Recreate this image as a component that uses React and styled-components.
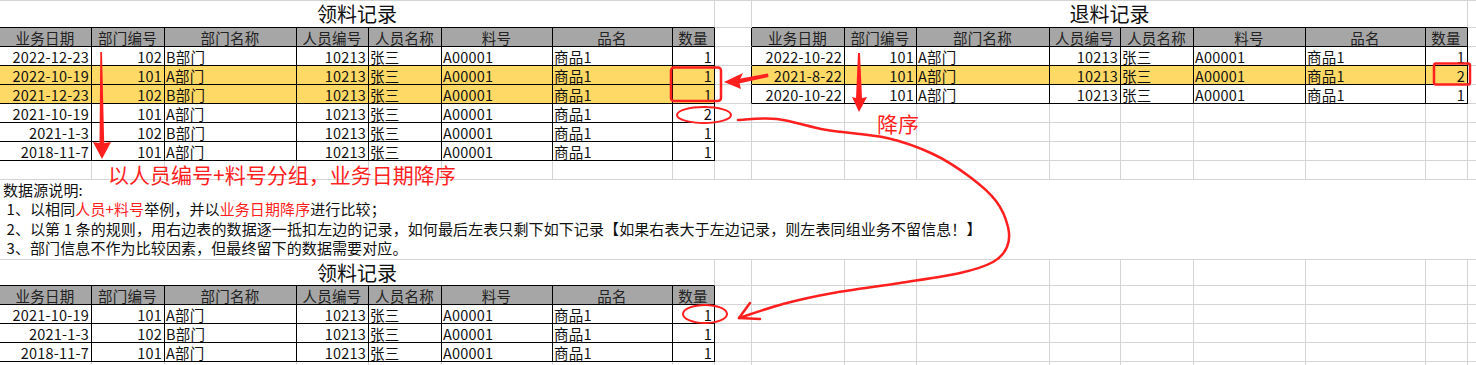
import React from 'react';
import styled, { createGlobalStyle } from 'styled-components';

const GRID = '#d4d4d4';
const LINE = '#000';
const RED = '#ff1f1f';

const COLS = [92, 73, 132, 72, 73, 111, 120, 42, 37, 93, 72, 133, 71, 73, 112, 120, 42, 60];
const ROWS = [1, 27, 19, 19, 19, 19, 19, 19, 19, 19, 80, 26, 19, 19, 19, 19, 19];

const HEAD = ['业务日期', '部门编号', '部门名称', '人员编号', '人员名称', '料号', '品名', '数量'];
const ALIGN = ['flex-end', 'flex-end', 'flex-start', 'flex-end', 'flex-start', 'flex-start', 'flex-start', 'flex-end'];

const row = (date, dep, depName, qty, hl) => ({
  hl,
  vals: [date, dep, depName, '10213', '张三', 'A00001', '商品1', qty],
});

const issueRows = [
  row('2022-12-23', '102', 'B部门', '1'),
  row('2022-10-19', '101', 'A部门', '1', true),
  row('2021-12-23', '102', 'B部门', '1', true),
  row('2021-10-19', '101', 'A部门', '2'),
  row('2021-1-3', '102', 'B部门', '1'),
  row('2018-11-7', '101', 'A部门', '1'),
];

const returnRows = [
  row('2022-10-22', '101', 'A部门', '1'),
  row('2021-8-22', '101', 'A部门', '2', true),
  row('2020-10-22', '101', 'A部门', '1'),
];

const leftRows = [
  row('2021-10-19', '101', 'A部门', '1'),
  row('2021-1-3', '102', 'B部门', '1'),
  row('2018-11-7', '101', 'A部门', '1'),
];

// smooth line through hand-drawn points
function smooth(pts) {
  let d = `M${pts[0][0]} ${pts[0][1]}`;
  for (let i = 0; i < pts.length - 1; i++) {
    const p0 = pts[i - 1] || pts[i];
    const p1 = pts[i];
    const p2 = pts[i + 1];
    const p3 = pts[i + 2] || p2;
    const c1 = [p1[0] + (p2[0] - p0[0]) / 6, p1[1] + (p2[1] - p0[1]) / 6];
    const c2 = [p2[0] - (p3[0] - p1[0]) / 6, p2[1] - (p3[1] - p1[1]) / 6];
    d += ` C${c1[0]} ${c1[1]} ${c2[0]} ${c2[1]} ${p2[0]} ${p2[1]}`;
  }
  return d;
}

const curve = [
  [738, 120], [777, 119], [827, 130], [887, 138], [933, 154], [970, 177],
  [996, 201], [1008, 227], [1007, 247], [993, 262], [960, 273], [900, 283],
  [833, 293], [783, 304], [739, 318],
];

function buildSheet() {
  const cells = {};
  const covered = new Set();
  const put = (r, c, props) => {
    const prev = cells[`${r}-${c}`] || {};
    const cell = { r, c, span: 1, rb: GRID, bb: GRID, ...prev, ...props };
    cells[`${r}-${c}`] = cell;
    for (let k = 1; k < cell.span; k++) covered.add(`${r}-${c + k}`);
  };

  const table = (r0, c0, rows) => {
    HEAD.forEach((h, i) => put(r0, c0 + i, { text: h, kind: 'head', rb: LINE, bb: LINE }));
    rows.forEach((rw, j) => {
      rw.vals.forEach((v, i) =>
        put(r0 + 1 + j, c0 + i, { text: v, align: ALIGN[i], bg: rw.hl ? '#ffd966' : undefined, rb: LINE, bb: LINE })
      );
    });
    if (c0 > 1) {
      for (let r = r0; r <= r0 + rows.length; r++) put(r, c0 - 1, { rb: LINE });
    }
  };

  put(2, 1, { span: 8, kind: 'title', text: '领料记录', bb: LINE });
  put(2, 10, { span: 8, kind: 'title', text: '退料记录', bb: LINE });
  table(3, 1, issueRows);
  table(3, 10, returnRows);
  put(11, 1, { span: 18, kind: 'desc', rb: 'transparent' });
  put(12, 1, { span: 8, kind: 'title', text: '领料记录', bb: LINE });
  table(13, 1, leftRows);

  const out = [];
  ROWS.forEach((_, ri) => {
    const r = ri + 1;
    COLS.forEach((__, ci) => {
      const c = ci + 1;
      const key = `${r}-${c}`;
      if (covered.has(key)) return;
      out.push(cells[key] || { r, c, span: 1, rb: GRID, bb: GRID });
    });
  });
  return out;
}

export default function App() {
  const cells = buildSheet();

  return (
    <>
      <GlobalStyle />
      <Sheet>
        {cells.map((cell) => {
          const common = {
            key: `${cell.r}-${cell.c}`,
            $r: cell.r,
            $c: cell.c,
            $span: cell.span,
            $rb: cell.rb,
            $bb: cell.bb,
          };
          if (cell.kind === 'title') return <TitleCell {...common}>{cell.text}</TitleCell>;
          if (cell.kind === 'head') return <HeadCell {...common}>{cell.text}</HeadCell>;
          if (cell.kind === 'desc')
            return (
              <DescCell {...common}>
                <div>数据源说明:</div>
                <div> 1、以相同<Red>人员+料号</Red>举例，并以<Red>业务日期降序</Red>进行比较；</div>
                <div> 2、以第 1 条的规则，用右边表的数据逐一抵扣左边的记录，如何最后左表只剩下如下记录【如果右表大于左边记录，则左表同组业务不留信息！】</div>
                <div> 3、部门信息不作为比较因素，但最终留下的数据需要对应。</div>
              </DescCell>
            );
          return (
            <Cell {...common} $align={cell.align} $bg={cell.bg}>
              {cell.text}
            </Cell>
          );
        })}

        <Overlay viewBox="0 0 1476 365" width="1476" height="365">
          <g fill={RED}>
            <polygon points="100.3,52 102,52 104.2,143 111,142 102,159 93,142 99.5,143" />
            <polygon points="858,53 860,53 862,98 867,97 859,112 852,97 856,98" />
            <polygon points="768,73.5 768.5,77 739,83.5 738,79" />
            <polygon points="724,82 743,73 739,81.5 741,89" />
          </g>
          <g fill="none" stroke={RED} strokeWidth="2.5" strokeLinecap="round" strokeLinejoin="round">
            <rect x="671" y="67.5" width="50" height="33.5" rx="3" />
            <rect x="1434" y="63.5" width="36" height="21" rx="2" />
            <ellipse cx="704" cy="115" rx="27" ry="8" strokeWidth="2" />
            <ellipse cx="705" cy="314" rx="22" ry="9" strokeWidth="2" />
            <path d={smooth(curve)} />
            <path d="M750 303 L739 318 L760 319" />
          </g>
        </Overlay>
        <Note $x={108} $y={166}>以人员编号+料号分组，业务日期降序</Note>
        <Note $x={877} $y={115}>降序</Note>
      </Sheet>
    </>
  );
}

const GlobalStyle = createGlobalStyle`
  html, body {
    margin: 0;
    padding: 0;
    background: #fff;
    overflow: hidden;
  }
  body {
    font-family: "Noto Sans CJK SC", "Noto Sans", sans-serif;
    color: #000;
  }
`;

const Sheet = styled.div`
  position: relative;
  width: 1476px;
  height: 365px;
  overflow: hidden;
  display: grid;
  grid-template-columns: ${COLS.map((w) => `${w}px`).join(' ')};
  grid-template-rows: ${ROWS.map((h) => `${h}px`).join(' ')};
`;

const Cell = styled.div`
  grid-column: ${(p) => p.$c} / span ${(p) => p.$span};
  grid-row: ${(p) => p.$r};
  box-sizing: border-box;
  border-right: 1px solid ${(p) => p.$rb};
  border-bottom: 1px solid ${(p) => p.$bb};
  background: ${(p) => p.$bg || 'transparent'};
  display: flex;
  align-items: flex-end;
  justify-content: ${(p) => p.$align || 'flex-start'};
  padding: 0 2px 0 1px;
  font-size: 14.5px;
  line-height: 17px;
  letter-spacing: 0.2px;
  white-space: nowrap;
  overflow: hidden;
  color: #111;
`;

const HeadCell = styled(Cell)`
  background: #a6a6a6;
  justify-content: center;
  color: #222;
`;

const TitleCell = styled(Cell)`
  justify-content: center;
  align-items: center;
  font-size: 20px;
  line-height: 26px;
  letter-spacing: 0;
  padding: 0;
  overflow: visible;
`;

const DescCell = styled(Cell)`
  display: block;
  padding: 0 3px;
  font-size: 15px;
  line-height: 19.3px;
  letter-spacing: 0.1px;
  white-space: pre;
  color: #111;
`;

const Red = styled.span`
  color: ${RED};
`;

const Overlay = styled.svg`
  position: absolute;
  top: 0;
  left: 0;
  pointer-events: none;
`;

const Note = styled.div`
  position: absolute;
  left: ${(p) => p.$x}px;
  top: ${(p) => p.$y}px;
  font-size: 21px;
  line-height: 16px;
  color: ${RED};
  white-space: nowrap;
`;
